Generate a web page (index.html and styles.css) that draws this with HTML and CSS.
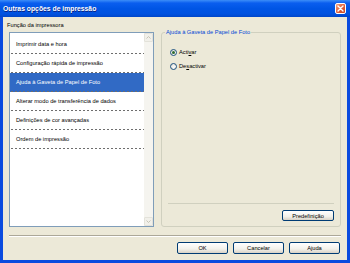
FILE: index.html
```html
<!DOCTYPE html>
<html lang="pt">
<head>
    <meta charset="UTF-8">
    <title>Outras opções de impressão</title>
    <link rel="stylesheet" href="styles.css">
</head>
<body>
    <div class="window">
        <div class="titlebar">
            <span class="title">Outras opções de impressão</span>
            <span class="close-btn">
                <svg width="7" height="7" viewBox="0 0 7 7"><path d="M1 1L6 6M6 1L1 6" stroke="#fff" stroke-width="1.4" stroke-linecap="round"/></svg>
            </span>
        </div>
        <div class="client">
            <div class="panes">
                <div class="left-col">
                    <div class="caption">Função da impressora</div>
                    <div class="listbox">
                        <ul class="items">
                            <li>Imprimir data e hora</li>
                            <li>Configuração rápida de impressão</li>
                            <li class="selected">Ajuda à Gaveta de Papel de Foto</li>
                            <li>Alterar modo de transferência de dados</li>
                            <li>Definições de cor avançadas</li>
                            <li>Ordem de impressão</li>
                        </ul>
                        <div class="scrollbar">
                            <span class="sb-btn"><svg width="5" height="3" viewBox="0 0 5 3"><path d="M0.5 2.5L2.5 0.5L4.5 2.5" fill="none" stroke="#C6C4B6" stroke-width="1"/></svg></span>
                            <span class="sb-track"></span>
                            <span class="sb-btn"><svg width="5" height="3" viewBox="0 0 5 3"><path d="M0.5 0.5L2.5 2.5L4.5 0.5" fill="none" stroke="#C6C4B6" stroke-width="1"/></svg></span>
                        </div>
                    </div>
                </div>
                <fieldset class="group">
                    <legend>Ajuda à Gaveta de Papel de Foto</legend>
                    <div class="radios">
                        <label class="radio"><span class="radio-dot checked"></span><span>Acti<u>v</u>ar</span></label>
                        <label class="radio"><span class="radio-dot"></span><span>De<u>s</u>activar</span></label>
                    </div>
                    <div class="group-foot">
                        <button class="btn btn-wide">Predefinição</button>
                    </div>
                </fieldset>
            </div>
            <div class="divider"></div>
            <div class="actions">
                <button class="btn">OK</button>
                <button class="btn">Cancelar</button>
                <button class="btn">Ajuda</button>
            </div>
        </div>
    </div>
</body>
</html>
```

FILE: styles.css
```css
body {
    margin: 0;
    font-family: "Liberation Sans", Arial, sans-serif;
    font-size: 5.7px;
    color: #000;
}
.window {
    width: 350px;
    height: 263px;
    box-sizing: border-box;
    display: flex;
    flex-direction: column;
    background-color: #0A4BDF;
    padding: 0 3px 3px 3px;
}
.titlebar {
    height: 17px;
    margin: 0 -3px;
    padding: 0 4px 0 3px;
    display: flex;
    align-items: center;
    justify-content: space-between;
    background: linear-gradient(#3C8DF8, #0A5EEF 18%, #0055E5 50%, #0052E0 82%, #0046C8);
    color: white;
    font-weight: bold;
    font-size: 6.8px;
}
.title {
    text-shadow: 0.5px 0.5px #0A1E7C;
}
.close-btn {
    width: 11px;
    height: 11px;
    box-sizing: border-box;
    border: 1px solid #fff;
    border-radius: 2px;
    background: linear-gradient(135deg, #F2A484, #E2633C 50%, #C7421F);
    display: flex;
    align-items: center;
    justify-content: center;
}

/* Dialog body */
.client {
    flex: 1;
    display: flex;
    flex-direction: column;
    background-color: #ECE9D8;
    padding: 4px 6px 6px 6px;
}
.panes {
    flex: 1;
    display: flex;
    gap: 7px;
}
.left-col {
    width: 145px;
    display: flex;
    flex-direction: column;
}
.caption {
    height: 8px;
    line-height: 8px;
    margin: 0 0 3px -2px;
}
.listbox {
    flex: 1;
    display: flex;
    border: 1px solid #7F9DB9;
    background-color: #fff;
}
.items {
    flex: 1;
    list-style: none;
    margin: 0;
    padding: 2px 0 0 0;
}
.items li {
    height: 18px;
    line-height: 18px;
    padding: 0 0 1px 6px;
    white-space: nowrap;
    background-image: linear-gradient(to right, #6E6E6E 2px, transparent 2px);
    background-size: 4px 1px;
    background-repeat: repeat-x;
    background-position: 1px 100%;
}
.items li.selected {
    background-color: #316AC5;
    color: #fff;
}
.scrollbar {
    width: 9px;
    display: flex;
    flex-direction: column;
    background-color: #F5F4EF;
}
.sb-track {
    flex: 1;
}
.sb-btn {
    height: 9px;
    box-sizing: border-box;
    border: 1px solid #E3E2DA;
    border-radius: 1px;
    background-color: #F1F0EA;
    display: flex;
    align-items: center;
    justify-content: center;
}

/* Group box */
.group {
    flex: 1;
    min-width: 0;
    margin: 7px 0 0 0;
    padding: 0 6px 5px 6px;
    border: 1px solid #D0D0BF;
    border-radius: 3px;
    display: flex;
    flex-direction: column;
}
.group legend {
    color: #0046D5;
    line-height: 8px;
    padding: 0 1px;
    margin-left: -3px;
}
.radios {
    margin-top: 9px;
}
.radio {
    display: flex;
    align-items: center;
    gap: 2px;
    height: 14px;
    padding-left: 2px;
}
.radio-dot {
    width: 7px;
    height: 7px;
    box-sizing: border-box;
    border: 1px solid #1C5180;
    border-radius: 50%;
    background: radial-gradient(circle at 60% 60%, #fff, #DCD9CE);
    display: flex;
    align-items: center;
    justify-content: center;
}
.radio-dot.checked::after {
    content: "";
    width: 3px;
    height: 3px;
    border-radius: 50%;
    background-color: #2E6B2E;
}
.group-foot {
    margin-top: auto;
    border-top: 1px solid #D0D0BF;
    padding-top: 6px;
    display: flex;
    justify-content: flex-end;
}

/* Buttons */
.btn {
    box-sizing: border-box;
    width: 51px;
    height: 12px;
    padding: 0;
    font: inherit;
    color: #000;
    border: 1px solid #003C74;
    border-radius: 2px;
    background: linear-gradient(#FFFFFF, #F2F1EB 60%, #D8D2C6);
}
.btn-wide {
    width: 52px;
    height: 11px;
}
.divider {
    margin-top: 8px;
    height: 2px;
    box-sizing: border-box;
    border-top: 1px solid #ACA899;
    border-bottom: 1px solid #fff;
}
.actions {
    margin-top: 5px;
    display: flex;
    justify-content: flex-end;
    gap: 5px;
    padding-right: 1px;
}
```
